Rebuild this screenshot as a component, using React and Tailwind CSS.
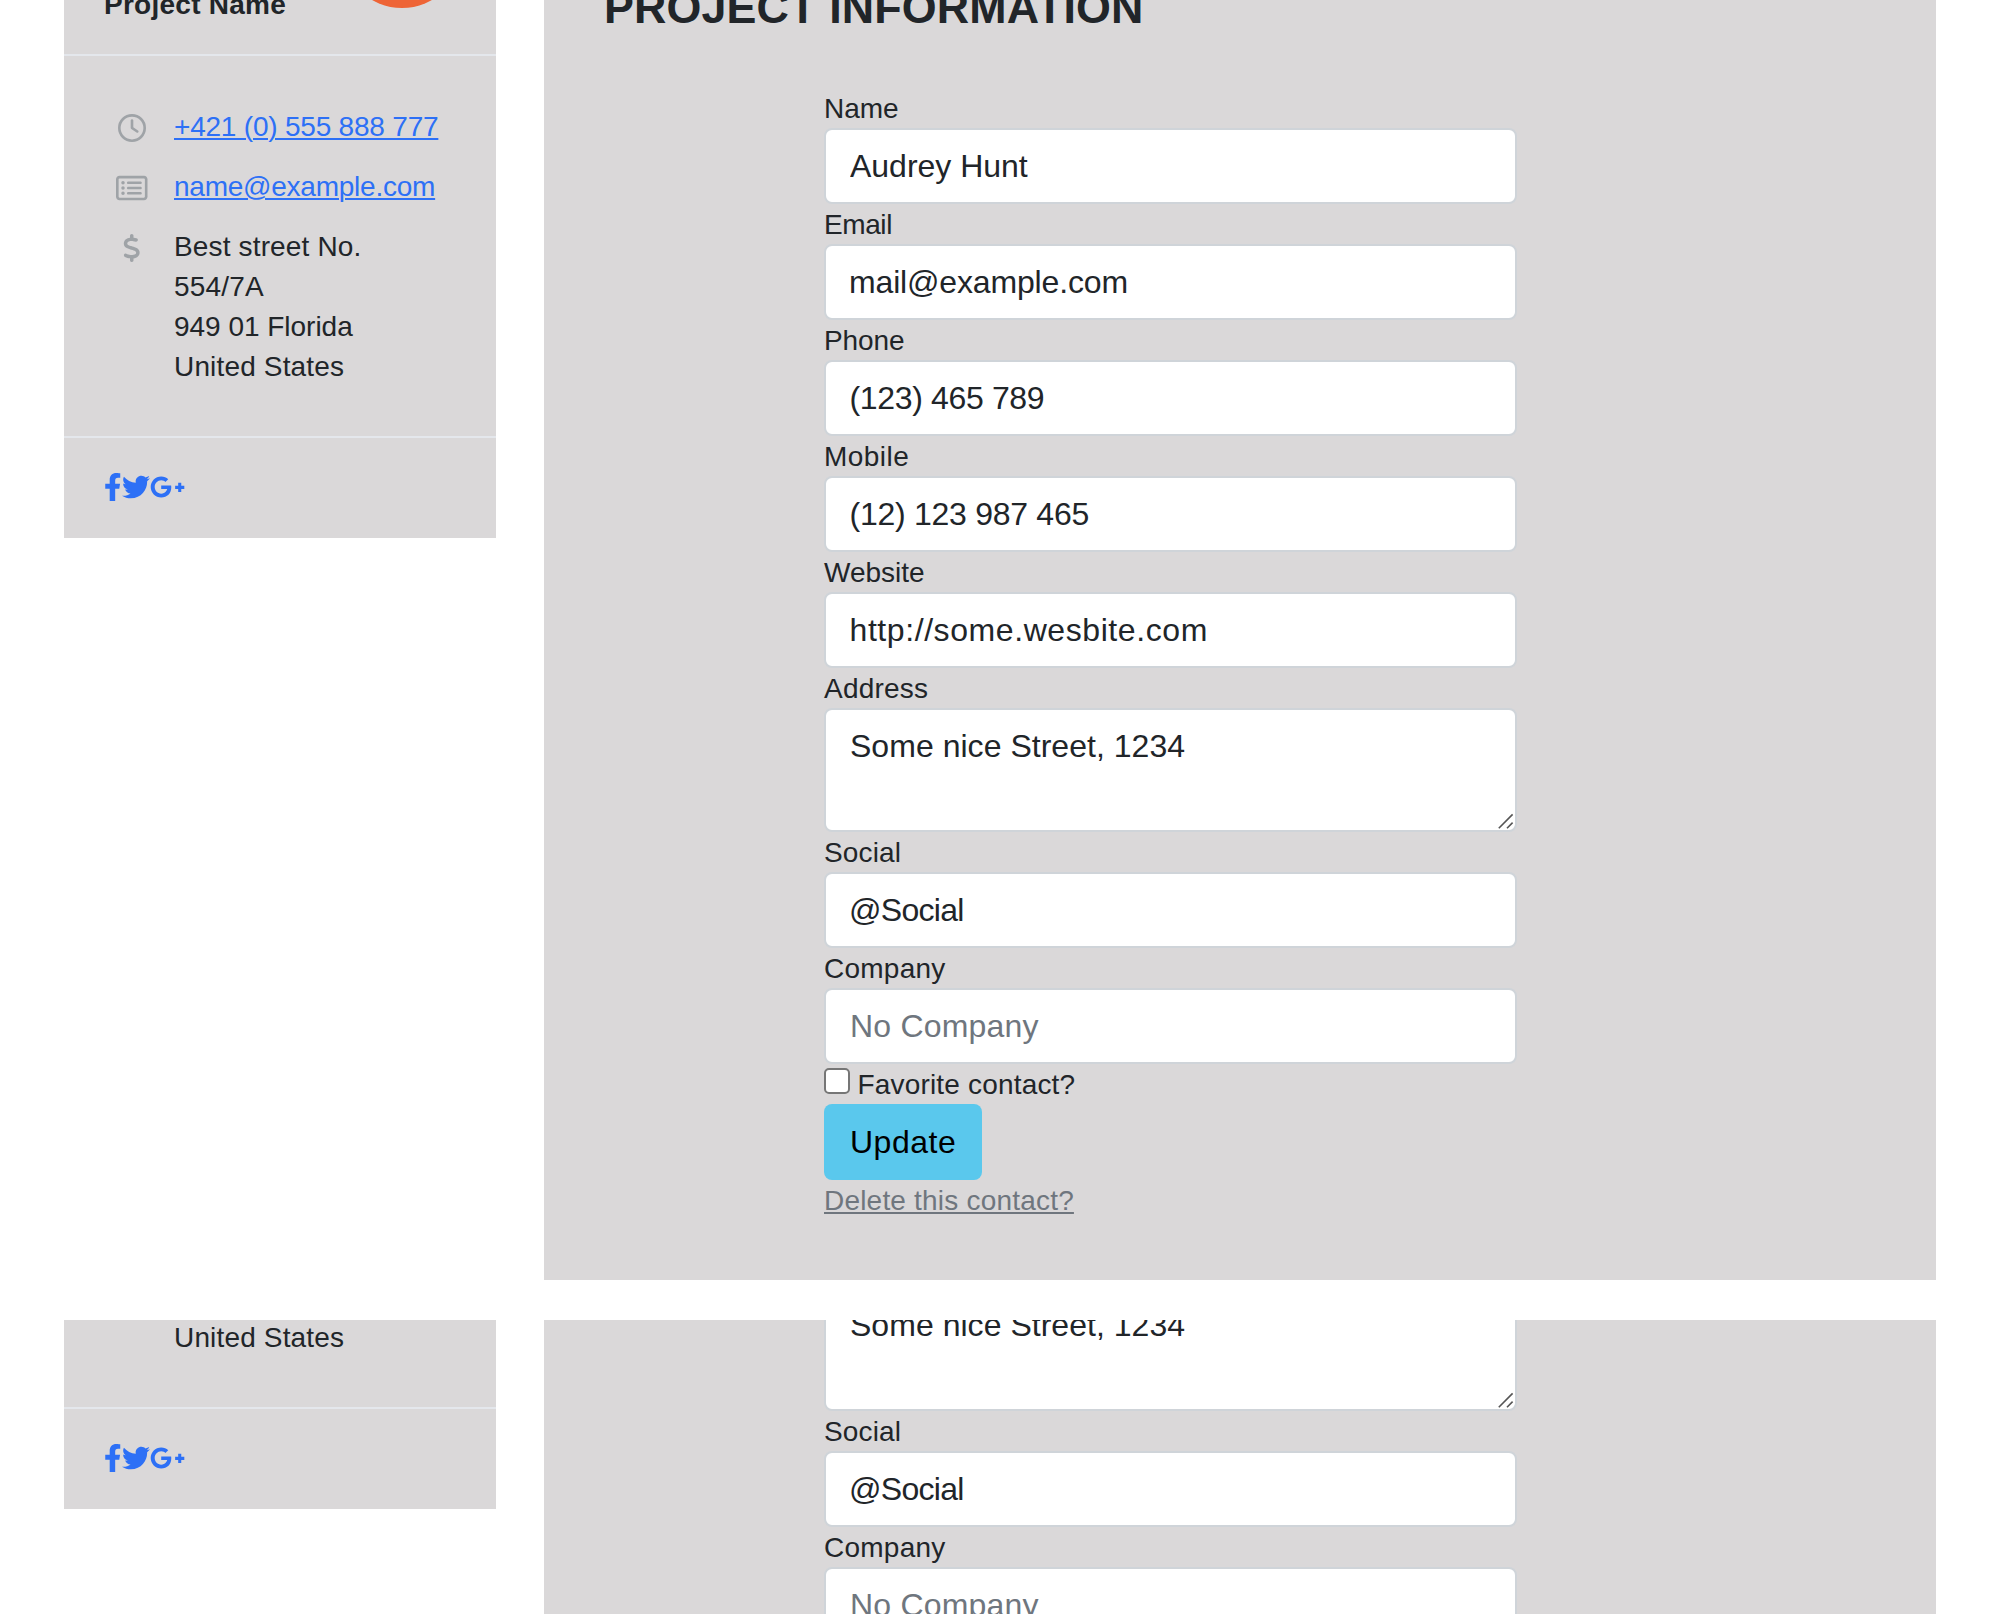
import React from 'react';
import { FaFacebookF, FaTwitter, FaGooglePlusG } from 'react-icons/fa';
import { FaRegClock, FaRegRectangleList, FaDollarSign } from 'react-icons/fa6';

const FIELDS = [
  { label: 'Name', labelClass: '', value: 'Audrey Hunt', valueClass: 'tracking-[-0.02px]' },
  { label: 'Email', labelClass: 'tracking-[-0.4px]', value: 'mail@example.com', valueClass: 'indent-[-1px] tracking-[-0.16px]' },
  { label: 'Phone', labelClass: 'tracking-[-0.1px]', value: '(123) 465 789', valueClass: 'indent-[-0.5px] tracking-[-0.35px]' },
  { label: 'Mobile', labelClass: 'tracking-[0.45px]', value: '(12) 123 987 465', valueClass: 'indent-[-0.5px] tracking-[-0.27px]' },
  { label: 'Website', labelClass: '', value: 'http://some.wesbite.com', valueClass: 'indent-[-0.5px] tracking-[0.58px]' },
  { label: 'Address', labelClass: 'tracking-[0.2px]', value: 'Some nice Street, 1234', multiline: true, valueClass: 'tracking-[0.03px]' },
  { label: 'Social', labelClass: 'tracking-[0.15px]', value: '@Social', valueClass: 'indent-[-1px] tracking-[-0.72px]' },
  { label: 'Company', labelClass: 'tracking-[0.25px]', placeholder: 'No Company', valueClass: 'tracking-[0.2px]' },
];

const CONTROL =
  'block w-full rounded-[8px] border-2 border-[#cfd4d9] bg-white px-[24px] py-[12px] text-[32px] leading-[48px] text-[#212529] outline-none placeholder:text-[#6f767e] placeholder:opacity-100';

function Field({ label, labelClass, value, placeholder, multiline, valueClass }) {
  return (
    <label className="block">
      <span className={`block h-[40px] pt-[2px] leading-[38px] ${labelClass}`}>{label}</span>
      {multiline ? (
        <span className="relative block h-[124px]">
          <textarea readOnly defaultValue={value} className={`${CONTROL} h-[124px] resize-none overflow-hidden ${valueClass}`} />
          <svg className="absolute right-[3px] bottom-[3px] h-[16px] w-[16px]" viewBox="0 0 16 16" fill="none" stroke="#555" strokeWidth="1.6">
            <path d="M0.8 15.2 14.6 1.4M9 15.2 14.6 9.6" />
          </svg>
        </span>
      ) : (
        <input readOnly defaultValue={value} placeholder={placeholder} className={`${CONTROL} h-[76px] ${valueClass}`} />
      )}
    </label>
  );
}

function ContactRow({ icon, children }) {
  return (
    <div className="flex gap-[26px]">
      <span className="flex h-[43px] w-[32px] shrink-0 items-center justify-center text-[#9fa3a7]">{icon}</span>
      <div className="pt-px whitespace-nowrap">{children}</div>
    </div>
  );
}

const UNDERLINE = 'underline decoration-2 underline-offset-[2px]';

function Sidebar({ className }) {
  return (
    <aside className={`w-[432px] shrink-0 self-start bg-[#dad8d9] ${className}`}>
      <header className="flex h-[216px] justify-between border-b-2 border-[#e4e7ec] pr-[34px] pl-[40px]">
        <h3 className="pt-[145px] font-bold tracking-[0.26px]">Project Name</h3>
        <div className="mt-[48px] h-[120px] w-[120px] rounded-full bg-[#ee6436]" />
      </header>
      <div className="flex h-[382px] flex-col gap-[17px] border-b-2 border-[#e4e7ec] pt-[50px] pl-[52px]">
        <ContactRow icon={<FaRegClock className="h-[28px] w-[28px]" />}>
          <a className={`text-[#2d70f6] tracking-[-0.21px] ${UNDERLINE}`}>+421 (0) 555 888 777</a>
        </ContactRow>
        <ContactRow icon={<FaRegRectangleList className="h-[28px] w-[31.5px]" />}>
          <a className={`text-[#2d70f6] tracking-[-0.24px] ${UNDERLINE}`}>name@example.com</a>
        </ContactRow>
        <ContactRow icon={<FaDollarSign className="h-[28px] w-[17.5px]" />}>
          <p className="tracking-[0.15px]">Best street No.</p>
          <p className="tracking-[0.2px]">554/7A</p>
          <p className="tracking-[-0.02px]">949 01 Florida</p>
          <p className="tracking-[0.16px]">United States</p>
        </ContactRow>
      </div>
      <footer className="flex h-[100px] pt-[35px] pl-[40px] text-[#2d70f6]">
        <FaFacebookF className="h-[28px] w-[17.5px]" />
        <FaTwitter className="h-[28px] w-[28px]" />
        <FaGooglePlusG className="h-[28px] w-[35px]" />
      </footer>
    </aside>
  );
}

function ProjectForm({ className }) {
  return (
    <main className={`h-[1440px] w-[1392px] shrink-0 bg-[#dad8d9] px-[60px] pt-[140px] ${className}`}>
      <h2 className="h-[108px] text-[44.8px] leading-[54px] font-bold tracking-[0.15px]">PROJECT INFORMATION</h2>
      <form className="ml-[220px] w-[693px]">
        {FIELDS.map((f) => (
          <Field key={f.label} {...f} />
        ))}
        <label className="flex h-[40px] gap-[7.5px]">
          <span className="mt-[4px] h-[26px] w-[26px] rounded-[5px] border-2 border-[#767676] bg-white" />
          <span className="pt-[2px] leading-[38px] tracking-[0.18px]">Favorite contact?</span>
        </label>
        <button type="button" className="block h-[76px] w-[158px] rounded-[8px] bg-[#5ac8ed] pl-[26px] text-left text-[32px] leading-[48px] tracking-[0.5px] text-black">
          Update
        </button>
        <div className="pt-px">
          <a className={`tracking-[0.2px] text-[#6f767e] ${UNDERLINE}`}>Delete this contact?</a>
        </div>
      </form>
    </main>
  );
}

export default function App() {
  return (
    <div className="flex h-[1614px] w-[2000px] flex-col gap-[40px] overflow-hidden bg-white font-['Liberation_Sans',Arial,sans-serif] text-[28px] leading-[40px] text-[#212529]">
      <section className="flex h-[1280px] shrink-0 gap-[48px] overflow-hidden pl-[64px]">
        <Sidebar className="-mt-[160px]" />
        <ProjectForm className="-mt-[160px]" />
      </section>
      <section className="flex h-[294px] shrink-0 gap-[48px] overflow-hidden pl-[64px]">
        <Sidebar className="-mt-[509px]" />
        <ProjectForm className="-mt-[901px]" />
      </section>
    </div>
  );
}
